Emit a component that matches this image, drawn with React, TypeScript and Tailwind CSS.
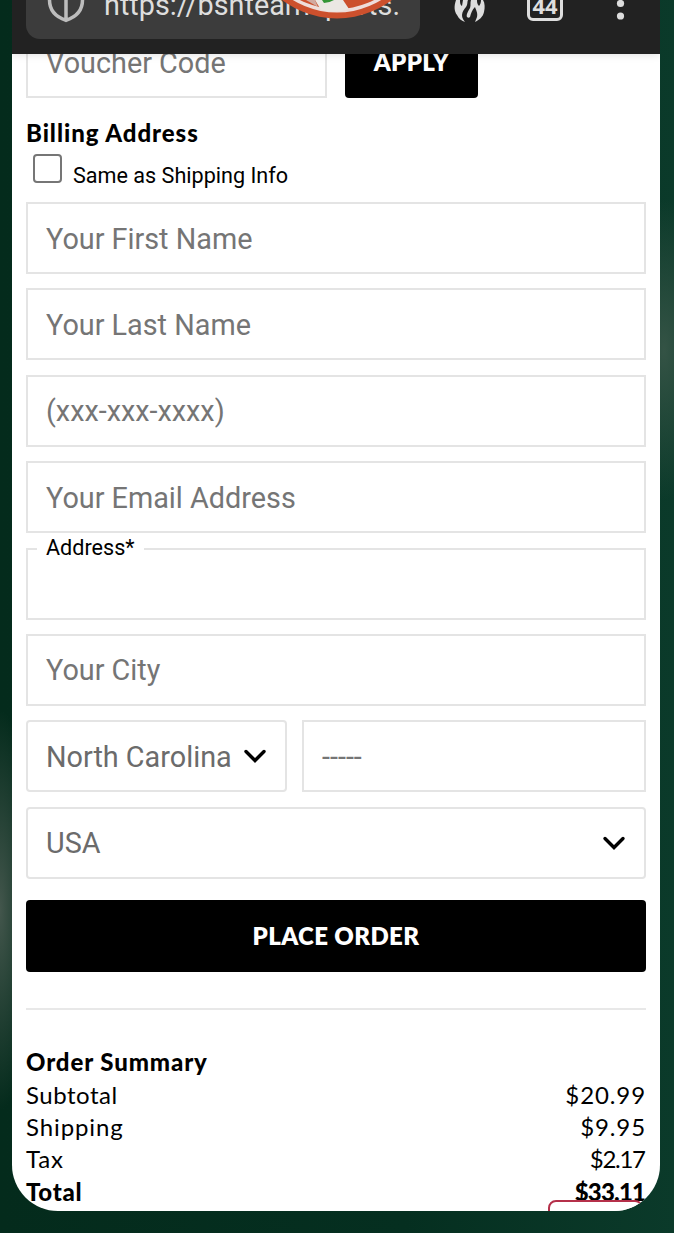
import React, { useState } from 'react';

const inputClass =
  "block h-[72px] w-full min-w-0 border-2 border-[#e4e4e4] bg-white px-[18px] pt-px text-[28.8px] text-[#6b6b6b] placeholder-[#757575] outline-none";

const summary = [
  { label: 'Subtotal', value: '$20.99', labelClass: 'tracking-[0.5px]', valueClass: 'tracking-[0.9px]' },
  { label: 'Shipping', value: '$9.95', labelClass: 'tracking-[0.9px]', valueClass: 'tracking-[0.9px]' },
  { label: 'Tax', value: '$2.17', labelClass: 'tracking-[0.8px]', valueClass: 'tracking-[-1.300px] mr-[1.300px]' },
];

const Chevron: React.FC = () => (
  <svg width="24" height="18" viewBox="0 0 24 18" fill="none" className="shrink-0">
    <path d="M3 4.500L12 13.500L21 4.500" stroke="#000" strokeWidth="3.400" strokeLinecap="round" />
  </svg>
);

const Select: React.FC<{ value: string; className: string }> = ({ value, className }) => (
  <button
    type="button"
    className={`flex h-[72px] items-center justify-between rounded-[4px] border-2 border-[#e4e4e4] bg-white pl-[18px] pr-[18px] text-[28.8px] text-[#6b6b6b] ${className}`}
  >
    <span className="whitespace-nowrap pt-[2px]">{value}</span>
    <Chevron />
  </button>
);

const BrowserBar: React.FC = () => (
  <header className="relative z-10 flex h-[54px] shrink-0 items-start bg-[#222222] pl-[14px] shadow-[0_1px_8px_rgba(0,0,0,0.12)]">
    <div className="flex h-[39px] w-[394px] shrink-0 items-start rounded-b-[14px] bg-[#3c3c3c] pl-[20px]">
      <svg width="40" height="24" viewBox="0 0 40 24" fill="none" className="shrink-0">
        <path d="M3.5 -10V0C3.5 10 10 17 20 20.3C30 17 36.500 10 36.500 0V-10M20 -10V20" stroke="#bdbdbd" strokeWidth="3.5" />
      </svg>
      <span className="-mt-[13px] ml-[18px] whitespace-nowrap text-[28.8px] leading-[36px] tracking-[0.02px] text-[#dedede]">
        https://bshteamsports.
      </span>
    </div>
    <svg width="32" height="24" viewBox="0 0 32 24" fill="#dddddd" className="ml-[34px] shrink-0">
      <path d="M2 0C0 6 0 11 3 15C5 19 8 21 11 22C6 16 8 12 12 7C14 4 13 2 14 0H9L8 6C6 5 6 2 6 0Z" />
      <path d="M17 0C16 3 17 5 16 8C14 11 12 15 13 17C14 18 15 18 16 17C17 13 18 10 21 7C22 10 24 13 23 17L21 22C25 20 29 17 30 12C31 8 31 3 29 0H27C27 3 26 5 25 6C23 4 23 2 23 0Z" />
    </svg>
    <div className="-mt-[15px] ml-[41px] flex h-[36px] w-[36px] shrink-0 items-center justify-center rounded-[6px] border-[3px] border-[#dedede] pt-[3px] font-['Open_Sans',sans-serif] text-[22px] font-bold leading-none text-[#dedede]">
      44
    </div>
    <svg width="10" height="24" viewBox="0 0 10 24" fill="#dddddd" className="ml-[52px] shrink-0">
      <circle cx="5.500" cy="3.500" r="3.600" />
      <circle cx="5.500" cy="16" r="3.600" />
    </svg>
    {/* round badge hanging over the address text */}
    <svg width="130" height="22" viewBox="0 0 130 22" className="absolute left-[260px] top-0">
      <circle cx="65" cy="-72" r="90.500" fill="#cc502d" />
      <circle cx="65" cy="-72" r="84.500" fill="#eeddda" />
      <circle cx="65" cy="-72" r="81" fill="#cc502d" />
      <path d="M43 0H71L77 9Q64 14 49 10Z" fill="#ebe7e3" />
      <path d="M34 0L46 7L43 0Z" fill="#d2aaa0" />
      <path d="M50 0H62Q57 3 52 3Z" fill="#349536" />
    </svg>
  </header>
);

export default function App() {
  const [sameAsShipping, setSameAsShipping] = useState<boolean>(false);

  return (
    <div className="h-[1233px] w-[674px] overflow-hidden bg-[#052f1f] bg-[radial-gradient(ellipse_35px_200px_at_0px_910px,#43564c,transparent),radial-gradient(ellipse_50px_150px_at_664px_350px,#345345,transparent),linear-gradient(90deg,#042b1c,#052f20_60%,#0b3a2a)] pb-[22px] pl-[12px] pr-[14px] font-[Roboto,sans-serif] text-black">
      <div className="flex h-[1211px] flex-col overflow-hidden rounded-b-[46px] bg-white">
        <BrowserBar />
        <main className="-mt-[28px] px-[14px]">
          <div className="flex gap-[18px]">
            <div className="w-[301px]">
              <input className={inputClass} placeholder="Voucher Code" />
            </div>
            <button className="h-[72px] w-[133px] rounded-[4px] bg-black font-[Lato,sans-serif] text-[24px] font-extrabold tracking-[0.3px] text-white">
              APPLY
            </button>
          </div>

          <h2 className="mt-[19px] font-[Lato,sans-serif] text-[24px] font-black leading-[32px] tracking-[0.95px]">Billing Address</h2>
          <label className="flex h-[53px] items-start pl-[7px] pt-[5px]">
            <input
              type="checkbox"
              checked={sameAsShipping}
              onChange={(e) => setSameAsShipping(e.target.checked)}
              className="h-[29px] w-[29px] appearance-none rounded-[4px] border-2 border-[#767676] checked:bg-black"
            />
            <span className="ml-[11px] mt-[9px] text-[21.6px] leading-[26px]">Same as Shipping Info</span>
          </label>

          <form className="space-y-[14.4px]" onSubmit={(e) => e.preventDefault()}>
            <input className={inputClass} placeholder="Your First Name" />
            <input className={inputClass} placeholder="Your Last Name" />
            <input className={inputClass} placeholder="(xxx-xxx-xxxx)" />
            <input className={inputClass} placeholder="Your Email Address" />
            <div className="relative">
              <input className={inputClass} id="address" />
              <label htmlFor="address" className="absolute -top-[13px] left-[11px] bg-white px-[9px] text-[21.6px] leading-[26px]">
                Address*
              </label>
            </div>
            <input className={inputClass} placeholder="Your City" />
            <div className="flex gap-[15px]">
              <Select value="North Carolina" className="w-[261px] shrink-0" />
              <input className={inputClass} placeholder="-----" />
            </div>
            <Select value="USA" className="w-full" />
            <button className="mt-[7px] h-[72px] w-full rounded-[4px] bg-black font-[Lato,sans-serif] text-[24px] font-extrabold tracking-[0.4px] text-white">
              PLACE ORDER
            </button>
          </form>

          <hr className="mt-[36px] border-t-2 border-[#e8e8e8]" />

          <section className="mt-[36px] font-[Lato,sans-serif] text-[24px] leading-[32.4px]">
            <h2 className="font-black tracking-[0.9px]">Order Summary</h2>
            {summary.map((row) => (
              <div key={row.label} className="flex justify-between">
                <span className={row.labelClass}>{row.label}</span>
                <span className={row.valueClass}>{row.value}</span>
              </div>
            ))}
            <div className="flex justify-between font-black">
              <span className="tracking-[0.7px]">Total</span>
              <span className="mr-[0.800px] tracking-[-0.800px]">$33.11</span>
            </div>
          </section>
          <div className="relative -mt-[8px] ml-auto mr-[3px] h-[40px] w-[95px] rounded-[8px] border-2 border-[#b5304a] bg-white" />
        </main>
      </div>
    </div>
  );
}
